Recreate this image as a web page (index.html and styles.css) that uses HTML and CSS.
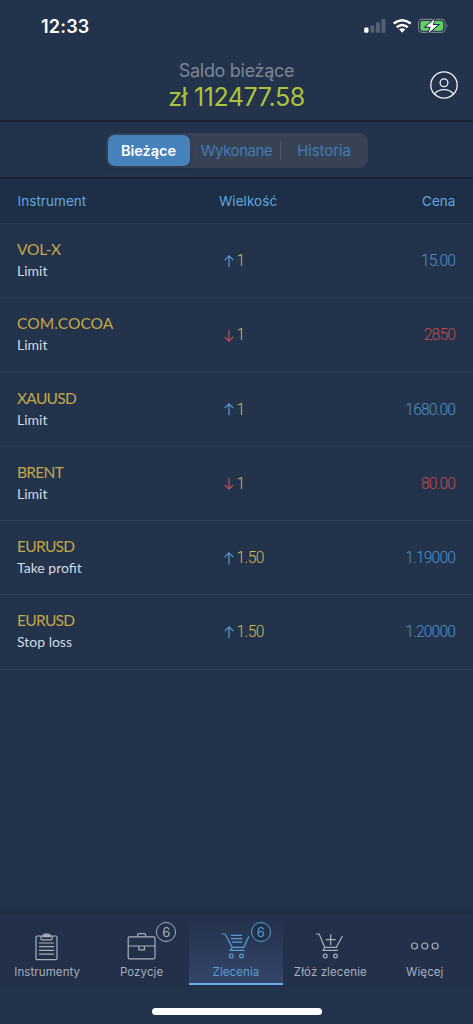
FILE: index.html
```html
<!DOCTYPE html>
<html lang="pl">
<head>
<meta charset="utf-8">
<meta name="viewport" content="width=device-width">
<title>Zlecenia</title>
<link rel="stylesheet" href="styles.css">
</head>
<body>
<svg class="defs" width="0" height="0">
  <symbol id="up" viewBox="0 0 10 13"><path d="M5 12.3V1.1M.7 5.2L5 .9l4.3 4.3"/></symbol>
  <symbol id="down" viewBox="0 0 10 13"><path d="M5 .7v11.2M.7 7.8L5 12.1l4.3-4.3"/></symbol>
</svg>
<div class="app">
  <div class="status">
    <span class="clock">12:33</span>
    <svg class="indicators" width="86" height="18" viewBox="0 0 86 18">
      <g fill="#536174"><rect x="6.2" y="7.5" width="4.1" height="7.2" rx="1"/><rect x="11.9" y="4.2" width="4.1" height="10.5" rx="1"/><rect x="17.4" y="1" width="4.1" height="13.7" rx="1"/></g>
      <rect x="0.2" y="9.6" width="4.3" height="5.2" rx="1.2" fill="#fff"/>
      <path d="M29.7 5.6Q38.2-1.2 46.7 5.6M32.7 9.3Q38.2 4.7 43.7 9.3" fill="none" stroke="#fff" stroke-width="2.5"/>
      <path d="M35.1 11.3Q38.2 9.1 41.3 11.3L38.2 14.7Z" fill="#fff"/>
      <rect x="54.5" y="1.4" width="26.6" height="13" rx="3.8" fill="none" stroke="#768290" stroke-width="1.1"/>
      <path d="M82.6 5.8q2.1 2.1 0 4.2z" fill="#768290"/>
      <rect x="56.4" y="3" width="22.8" height="9.8" rx="2.2" fill="#65d164"/>
      <path d="M70.6.9L61.9 8.7h4.8l-2.1 6.3 9.1-8h-5z" fill="#fff" stroke="#23334b" stroke-width="2" paint-order="stroke"/>
    </svg>
  </div>
  <header class="balance">
    <div class="balance-text">
      <div class="balance-label">Saldo bieżące</div>
      <div class="balance-value">zł 112477.58</div>
    </div>
    <svg class="avatar" width="28" height="28" viewBox="0 0 28 28" fill="none" stroke="#f2f4f6" stroke-width="1.3"><circle cx="14" cy="14" r="13.2"/><circle cx="14" cy="11.8" r="3.9"/><path d="M4.4 23q3.7-4.3 9.6-4.3t9.6 4.3"/></svg>
  </header>
  <nav class="filter">
    <div class="segments">
      <div class="segment selected">Bieżące</div>
      <div class="segment middle">Wykonane</div>
      <div class="segment last">Historia</div>
    </div>
  </nav>
  <div class="columns"><span>Instrument</span><span>Wielkość</span><span>Cena</span></div>
  <main class="orders">
    <div class="order"><div><div class="symbol vol">VOL-X</div><div class="kind">Limit</div></div><div class="size"><svg class="arrow"><use href="#up"/></svg><span>1</span></div><div class="price">15.00</div></div>
    <div class="order sell"><div><div class="symbol cocoa">COM.COCOA</div><div class="kind">Limit</div></div><div class="size"><svg class="arrow"><use href="#down"/></svg><span>1</span></div><div class="price">2850</div></div>
    <div class="order"><div><div class="symbol">XAUUSD</div><div class="kind">Limit</div></div><div class="size"><svg class="arrow"><use href="#up"/></svg><span>1</span></div><div class="price">1680.00</div></div>
    <div class="order sell"><div><div class="symbol">BRENT</div><div class="kind">Limit</div></div><div class="size"><svg class="arrow"><use href="#down"/></svg><span>1</span></div><div class="price">80.00</div></div>
    <div class="order"><div><div class="symbol">EURUSD</div><div class="kind">Take profit</div></div><div class="size"><svg class="arrow"><use href="#up"/></svg><span>1.50</span></div><div class="price">1.19000</div></div>
    <div class="order"><div><div class="symbol">EURUSD</div><div class="kind">Stop loss</div></div><div class="size"><svg class="arrow"><use href="#up"/></svg><span>1.50</span></div><div class="price">1.20000</div></div>
  </main>
  <nav class="tabs">
    <div class="tab">
      <svg class="tab-icon" viewBox="0 0 32 32"><rect x="5" y="5" width="21" height="23.7" rx="1.2"/><path d="M10 5v3q0 .8.8.8h9.6q.8 0 .8-.8V5M8 12h15M8 15.7h15M8 19.4h15M8 23.1h15"/><path class="solid" d="M12 5.6V4.2h1l.8-1h3.8l.8 1h1v1.4z"/></svg>
      <span>Instrumenty</span>
    </div>
    <div class="tab">
      <svg class="tab-icon" viewBox="0 0 32 32"><rect x="2.2" y="5.8" width="26.8" height="22" rx="1"/><path d="M11.6 5.5V4q0-1.4 1.4-1.4h5.2q1.4 0 1.4 1.4v1.5M2.2 15h26.8M12.8 15v3.8h5.6V15"/></svg>
      <span>Pozycje</span><b class="badge">6</b>
    </div>
    <div class="tab active">
      <svg class="tab-icon" viewBox="0 0 32 32"><path d="M2 3h3.2l7 13.3h11.6l5.1-11M12.2 16.3l-2 3.1h14.3M10.9 4.3h11.2M10.9 7.7h11.2M11.9 11.1h10.2"/><circle cx="11.3" cy="25" r="1.9"/><circle cx="21.5" cy="25" r="1.9"/></svg>
      <span>Zlecenia</span><b class="badge">6</b>
    </div>
    <div class="tab">
      <svg class="tab-icon" viewBox="0 0 32 32"><path d="M2 3h3.200l5.500 13.300h11.600L28.500 5M10.700 16.300L9 19.400h15M11.700 8.700h10M16.700 3.200v11"/><circle cx="11.300" cy="25" r="1.900"/><circle cx="21.500" cy="25" r="1.900"/></svg>
      <span>Złóż zlecenie</span>
    </div>
    <div class="tab">
      <svg class="tab-icon" viewBox="0 0 32 32"><circle cx="5.5" cy="15" r="3"/><circle cx="15.8" cy="15" r="3"/><circle cx="26.1" cy="15" r="3"/></svg>
      <span>Więcej</span>
    </div>
  </nav>
  <div class="home"><div class="home-bar"></div></div>
</div>
</body>
</html>
```
FILE: styles.css
```css
* { box-sizing: border-box; }
body { margin: 0; background: #23334b; font-family: Inter, sans-serif; }
.defs { position: absolute; }
.app { width: 473px; height: 1024px; display: flex; flex-direction: column; overflow: hidden; }
.status { height: 54px; padding: 17px 25px 0 41px; display: flex; justify-content: space-between; flex: none; }
.clock { color: #fff; font-size: 18px; line-height: 20px; font-weight: 600; letter-spacing: .2px; }
.indicators { margin-top: 1px; margin-right: -2px; }
.balance { height: 66px; display: grid; grid-template-columns: 43px 1fr 43px; align-items: start; flex: none; }
.balance-text { grid-column: 2; text-align: center; white-space: nowrap; padding-top: 6px; }
.balance-label { font-size: 18px; line-height: 22px; color: #7b8594; letter-spacing: -.3px; }
.balance-value { font-size: 25px; line-height: 30px; color: #abc43b; letter-spacing: -.4px; }
.avatar { margin-top: 17px; }
.filter { height: 57px; border-top: 2px solid #17212f; padding-top: 11px; display: flex; justify-content: center; flex: none; }
.segments { width: 262px; height: 35px; padding: 2px; border-radius: 9px; background: #374355; display: flex; font-size: 15px; line-height: 31px; color: #427bb5; text-align: center; }
.segment { height: 31px; }
.selected { width: 82px; border-radius: 7px; background: #4682bb; color: #fff; font-weight: 600; font-size: 14.5px; box-shadow: 0 2px 5px #1f2a3b55; }
.middle { width: 90px; padding-left: 4px; letter-spacing: -.45px; }
.last { flex: 1; padding-left: 3px; letter-spacing: -.1px; background: linear-gradient(#4b5b70, #4b5b70) 0 50%/1px 19px no-repeat; }
.columns { height: 47px; background: #1d2e46; border-top: 2px solid #17212f; border-bottom: 1px solid #2d3c54; padding: 0 17.5px; display: grid; grid-template-columns: 201.5px 1fr auto; align-items: center; color: #5fa9df; font-size: 13.5px; letter-spacing: .05px; flex: none; }
.orders { flex: 1; font-family: Lato, sans-serif; }
.order { height: 74.25px; border-bottom: 1px solid #2e3e56; padding: 14px 17px 0; display: grid; grid-template-columns: 207px 1fr auto; align-items: start; font-size: 15.5px; --tone: #5191c6; --arrow: #559bd0; }
.sell { --tone: #c04b4c; --arrow: #c6504f; }
.symbol { color: #c4a748; line-height: 22px; font-size: 15.5px; letter-spacing: -.7px; }
.vol { letter-spacing: -.2px; }
.cocoa { letter-spacing: .1px; }
.kind { color: #d4dae3; font-size: 14px; line-height: 21px; }
.size, .price { font-family: Roboto, sans-serif; font-weight: 300; font-size: 15.7px; margin-top: 12px; line-height: 22px; }
.size { display: flex; align-items: center; gap: 2.5px; color: #d3b956; letter-spacing: -.6px; }
.arrow { width: 10px; height: 13px; fill: none; stroke: var(--arrow); stroke-width: 1.2; }
.price { color: var(--tone); margin-right: 1px; letter-spacing: -.9px; }
.tabs { height: 72px; background: #223049; box-shadow: 0 -2px 4px #1b2a3d; display: grid; grid-template-columns: repeat(5, 94.4px); flex: none; }
.tab { position: relative; height: 71px; padding-top: 17px; display: flex; flex-direction: column; align-items: center; color: #a7afbb; font-size: 11.5px; line-height: 18px; letter-spacing: .1px; white-space: nowrap; }
.tab-icon { width: 32px; height: 32px; fill: none; stroke: currentColor; stroke-width: 1.2; flex: none; }
.solid { fill: currentColor; }
.active { color: #559ed6; background: linear-gradient(#223049, #35456a); border-bottom: 2px solid #63aee8; }
.badge { position: absolute; left: 62px; top: 8px; width: 20px; height: 20px; border: 1px solid currentColor; border-radius: 50%; text-align: center; font-size: 13px; line-height: 18px; font-weight: 400; letter-spacing: 0; background: #223049; }
.home { height: 38px; display: flex; justify-content: center; padding-top: 22px; flex: none; }
.home-bar { width: 170px; height: 7px; border-radius: 4px; background: #fff; }
```
